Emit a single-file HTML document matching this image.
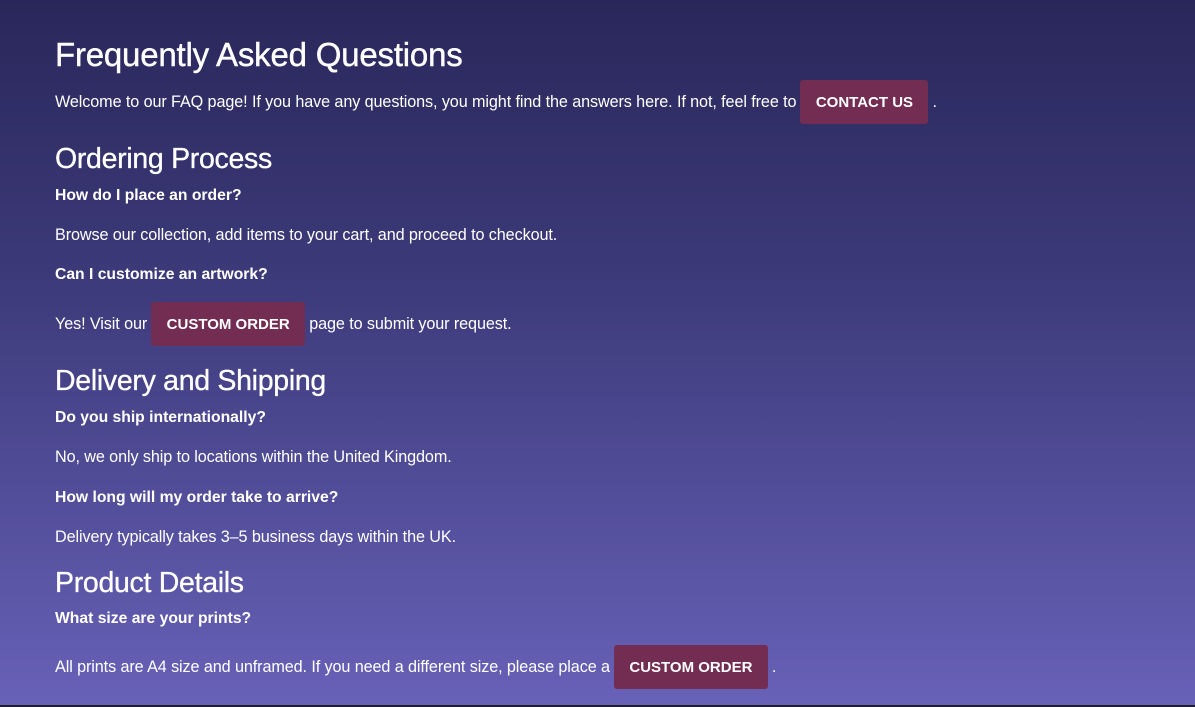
<!DOCTYPE html>
<html><head><meta charset="utf-8"><style>
html,body{margin:0;padding:0;}
body{width:1195px;height:707px;overflow:hidden;position:relative;background:linear-gradient(180deg,#29275a 0%,#3d3a7a 40%,#6861b8 100%);color:#fff;font-family:"Liberation Sans",sans-serif;}
.l{position:absolute;left:55px;white-space:nowrap;display:flex;align-items:center;}
h1,h2{margin:0;font-weight:normal;}
h1{font-size:33px;letter-spacing:-0.2px;-webkit-text-stroke:0.4px #fff;}
h2{font-size:28.5px;letter-spacing:-0.3px;-webkit-text-stroke:0.3px #fff;}
.q{font-weight:bold;font-size:15.7px;}
.t{font-size:16.2px;letter-spacing:-0.1px;}
.b{display:inline-block;background:#732c52;color:#fff;font-weight:bold;font-size:15px;border-radius:3px;height:44px;line-height:46px;text-align:center;margin:0 4px;letter-spacing:0;}
.bot{position:absolute;left:0;right:0;bottom:0;height:2px;background:#1f1e2c;}
</style></head><body>
<div class="l" style="top:35px;height:40px"><h1>Frequently Asked Questions</h1></div>
<div class="l t" style="top:80px;height:44px">Welcome to our FAQ page! If you have any questions, you might find the answers here. If not, feel free to <span class="b" style="width:128px">CONTACT US</span>.</div>
<div class="l" style="top:142px;height:34px"><h2>Ordering Process</h2></div>
<div class="l q" style="top:186px;height:20px">How do I place an order?</div>
<div class="l t" style="top:225px;height:20px">Browse our collection, add items to your cart, and proceed to checkout.</div>
<div class="l q" style="top:265px;height:20px">Can I customize an artwork?</div>
<div class="l t" style="top:302px;height:44px">Yes! Visit our <span class="b" style="width:154px">CUSTOM ORDER</span> page to submit your request.</div>
<div class="l" style="top:364px;height:34px"><h2>Delivery and Shipping</h2></div>
<div class="l q" style="top:408px;height:20px">Do you ship internationally?</div>
<div class="l t" style="top:447px;height:20px">No, we only ship to locations within the United Kingdom.</div>
<div class="l q" style="top:488px;height:20px">How long will my order take to arrive?</div>
<div class="l t" style="top:527px;height:20px">Delivery typically takes 3–5 business days within the UK.</div>
<div class="l" style="top:566px;height:34px"><h2>Product Details</h2></div>
<div class="l q" style="top:609px;height:20px">What size are your prints?</div>
<div class="l t" style="top:645px;height:44px">All prints are A4 size and unframed. If you need a different size, please place a <span class="b" style="width:154px">CUSTOM ORDER</span>.</div>
<div class="bot"></div>
</body></html>
